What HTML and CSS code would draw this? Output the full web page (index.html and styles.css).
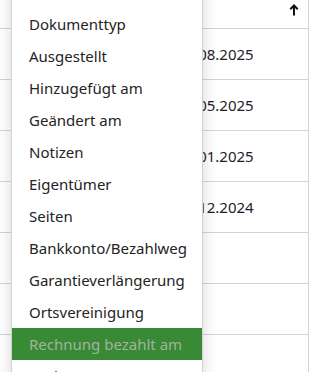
FILE: index.html
```html
<!DOCTYPE html>
<html lang="de">
<head>
  <meta charset="UTF-8">
  <title>Dokumente</title>
  <link rel="stylesheet" href="styles.css">
</head>
<body>
  <div class="grid">
    <div class="head">
      <svg class="sort" width="10" height="12" viewBox="0 0 10 12">
        <path d="M5 11.5V1.5M1.3 5.2L5 1.5l3.7 3.7" fill="none" stroke="#111" stroke-width="2"/>
      </svg>
    </div>
    <div class="row"><span class="date">12.08.2025</span></div>
    <div class="row"><span class="date">03.05.2025</span></div>
    <div class="row"><span class="date">21.01.2025</span></div>
    <div class="row"><span class="date">17.12.2024</span></div>
    <div class="row"></div>
    <div class="row"></div>
    <div class="row"></div>
  </div>

  <ul class="menu">
    <li>Dokumenttyp</li>
    <li>Ausgestellt</li>
    <li>Hinzugefügt am</li>
    <li>Geändert am</li>
    <li>Notizen</li>
    <li>Eigentümer</li>
    <li>Seiten</li>
    <li>Bankkonto/Bezahlweg</li>
    <li>Garantieverlängerung</li>
    <li>Ortsvereinigung</li>
    <li class="active">Rechnung bezahlt am</li>
    <li>Rechnungsnummer</li>
  </ul>
</body>
</html>
```

FILE: styles.css
```css
body {
  margin: 0;
  font-family: "Noto Sans", "Open Sans", sans-serif;
  color: #222;
  background: #fff;
  overflow: hidden;
}
.grid {
  width: 308px;
  border-right: 1px solid #d4d4d4;
}
.head {
  height: 28px;
  border-bottom: 1px solid #cfd5dd;
  display: flex;
  justify-content: flex-end;
  align-items: flex-start;
  padding-right: 9px;
}
.sort {
  margin-top: 4px;
}
.row {
  height: 50px;
  border-bottom: 1px solid #cfd5dd;
  display: flex;
  align-items: center;
  padding-left: 177px;
}
.date {
  font-size: 15px;
  color: #1e1e2a;
}
.menu {
  position: absolute;
  left: 11px;
  top: -20px;
  width: 190px;
  margin: 0;
  padding: 27px 0 0;
  list-style: none;
  background: #fff;
  border: 1px solid #d2d2d2;
  box-shadow: 0 2px 14px rgba(0, 0, 0, 0.16);
}
.menu li {
  height: 32px;
  line-height: 32px;
  padding-left: 17px;
  font-size: 15px;
  color: #242424;
  white-space: nowrap;
}
.menu li.active {
  background: #388a34;
  color: #a3b2a3;
}
```
